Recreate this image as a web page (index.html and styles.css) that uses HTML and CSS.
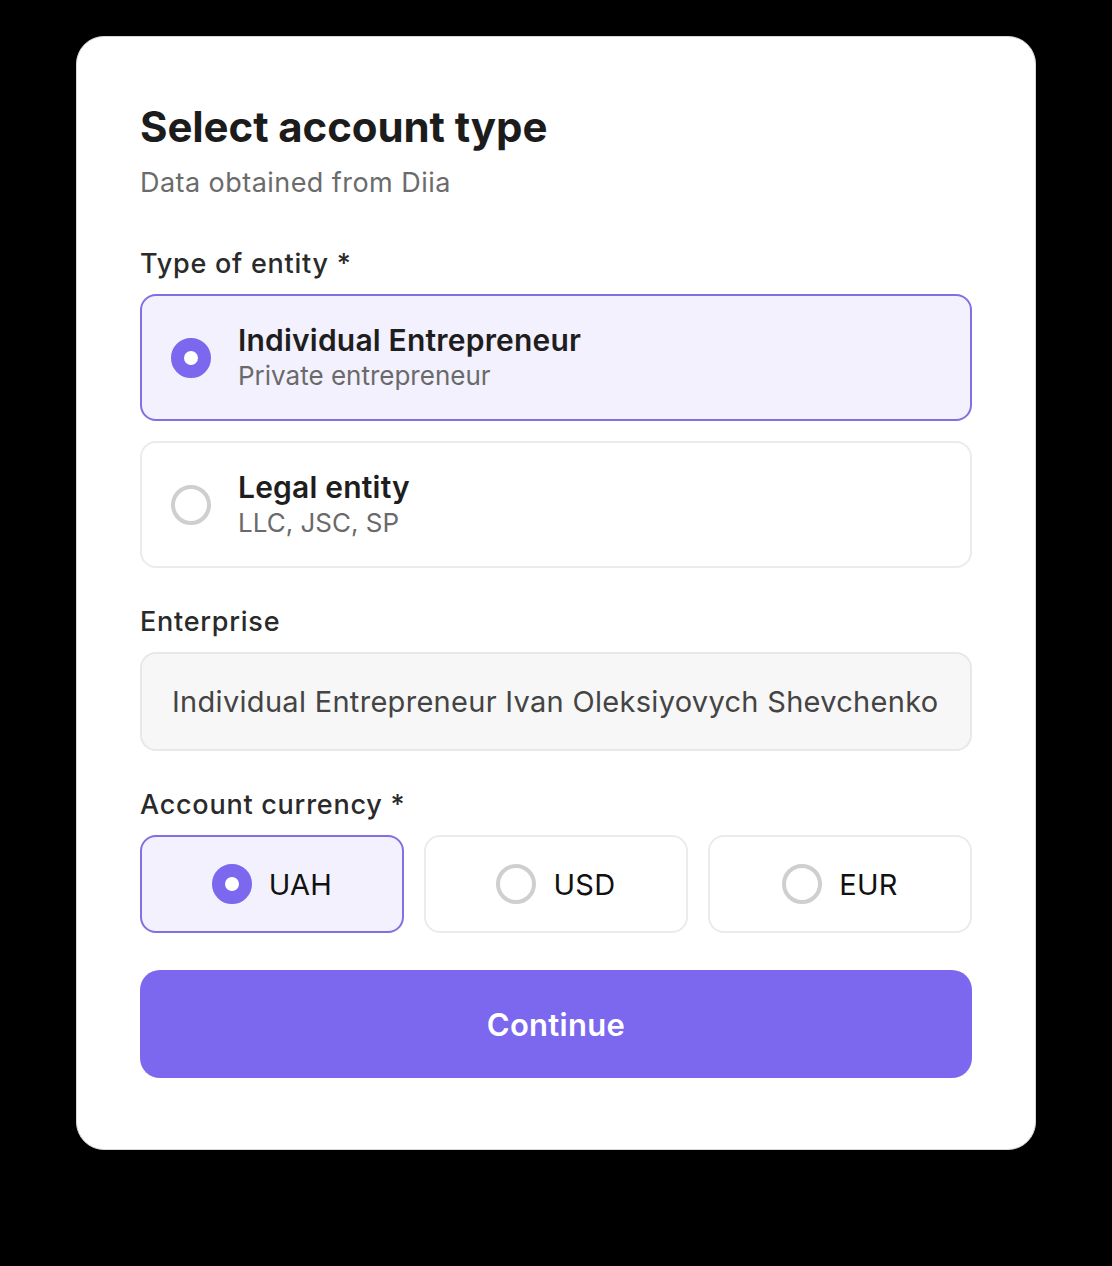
FILE: index.html
```html
<!DOCTYPE html>
<html lang="en">
<head>
    <meta charset="UTF-8">
    <meta name="viewport" content="width=device-width, initial-scale=1.0">
    <title>Select account type</title>
    <link rel="stylesheet" href="styles.css">
</head>
<body>
    <div class="card">
        <h1 class="title">Select account type</h1>
        <p class="subtitle">Data obtained from Diia</p>

        <div class="label">Type of entity *</div>
        <div class="options">
            <div class="option selected">
                <span class="radio"></span>
                <div class="option-text">
                    <div class="option-title">Individual Entrepreneur</div>
                    <div class="option-sub">Private entrepreneur</div>
                </div>
            </div>
            <div class="option">
                <span class="radio"></span>
                <div class="option-text">
                    <div class="option-title">Legal entity</div>
                    <div class="option-sub">LLC, JSC, SP</div>
                </div>
            </div>
        </div>

        <div class="label">Enterprise</div>
        <div class="field">Individual Entrepreneur Ivan Oleksiyovych Shevchenko</div>

        <div class="label">Account currency *</div>
        <div class="currencies">
            <div class="currency selected"><span class="radio"></span>UAH</div>
            <div class="currency"><span class="radio"></span>USD</div>
            <div class="currency"><span class="radio"></span>EUR</div>
        </div>

        <button class="btn">Continue</button>
    </div>
</body>
</html>
```

FILE: styles.css
```css
* {
    box-sizing: border-box;
    margin: 0;
    padding: 0;
}

body {
    background: #000;
    font-family: 'Inter', 'Noto Sans', sans-serif;
    color: #222;
    padding: 36px 0 0 76px;
}

.card {
    width: 960px;
    height: 1114px;
    background: #fff;
    border: 1px solid #d8d8d8;
    border-radius: 28px;
    padding: 66px 63px 0 63px;
}

.title {
    font-size: 42px;
    line-height: 48px;
    font-weight: 700;
    letter-spacing: -0.1px;
    color: #1c1c1c;
}

.subtitle {
    font-size: 27px;
    line-height: 36px;
    letter-spacing: 0.45px;
    color: #6b6b6b;
    margin-top: 14px;
}

.label {
    font-size: 27px;
    line-height: 36px;
    letter-spacing: 0.75px;
    font-weight: 500;
    color: #2a2a2a;
    margin-top: 36px;
    margin-bottom: 12px;
}

.subtitle + .label {
    margin-top: 45px;
}

.options {
    display: flex;
    flex-direction: column;
    gap: 20px;
}

.option {
    display: flex;
    align-items: center;
    gap: 27px;
    height: 127px;
    padding: 0 29px;
    border: 2px solid #ebebeb;
    border-radius: 16px;
    background: #fff;
}

.option.selected,
.currency.selected {
    border-color: #8170e3;
    background: #f3f1fe;
}

.radio {
    flex: none;
    width: 40px;
    height: 40px;
    border-radius: 50%;
    border: 4px solid #cfcfcf;
}

.selected .radio {
    border: 13px solid #7b68ee;
    background: #fff;
}

.option-title {
    font-size: 30px;
    line-height: 36px;
    letter-spacing: 0.2px;
    font-weight: 600;
    color: #1e1e1e;
}

.option-sub {
    font-size: 26px;
    line-height: 36px;
    color: #6a6a6a;
}

.field {
    height: 99px;
    display: flex;
    align-items: center;
    padding: 0 30px;
    background: #f7f7f7;
    border: 2px solid #e8e8e8;
    border-radius: 16px;
    font-size: 29px;
    letter-spacing: 0.3px;
    color: #444;
}

.currencies {
    display: flex;
    gap: 20px;
}

.currency {
    flex: 1;
    height: 98px;
    display: flex;
    align-items: center;
    justify-content: center;
    gap: 17px;
    border: 2px solid #ebebeb;
    border-radius: 16px;
    background: #fff;
    font-size: 29px;
    letter-spacing: 0.3px;
    color: #111;
}

.btn {
    display: block;
    width: 100%;
    height: 108px;
    margin-top: 37px;
    border: none;
    border-radius: 20px;
    background: #7b68ee;
    color: #fff;
    font-family: inherit;
    font-size: 31px;
    letter-spacing: 0.3px;
    font-weight: 600;
    cursor: pointer;
}
```
